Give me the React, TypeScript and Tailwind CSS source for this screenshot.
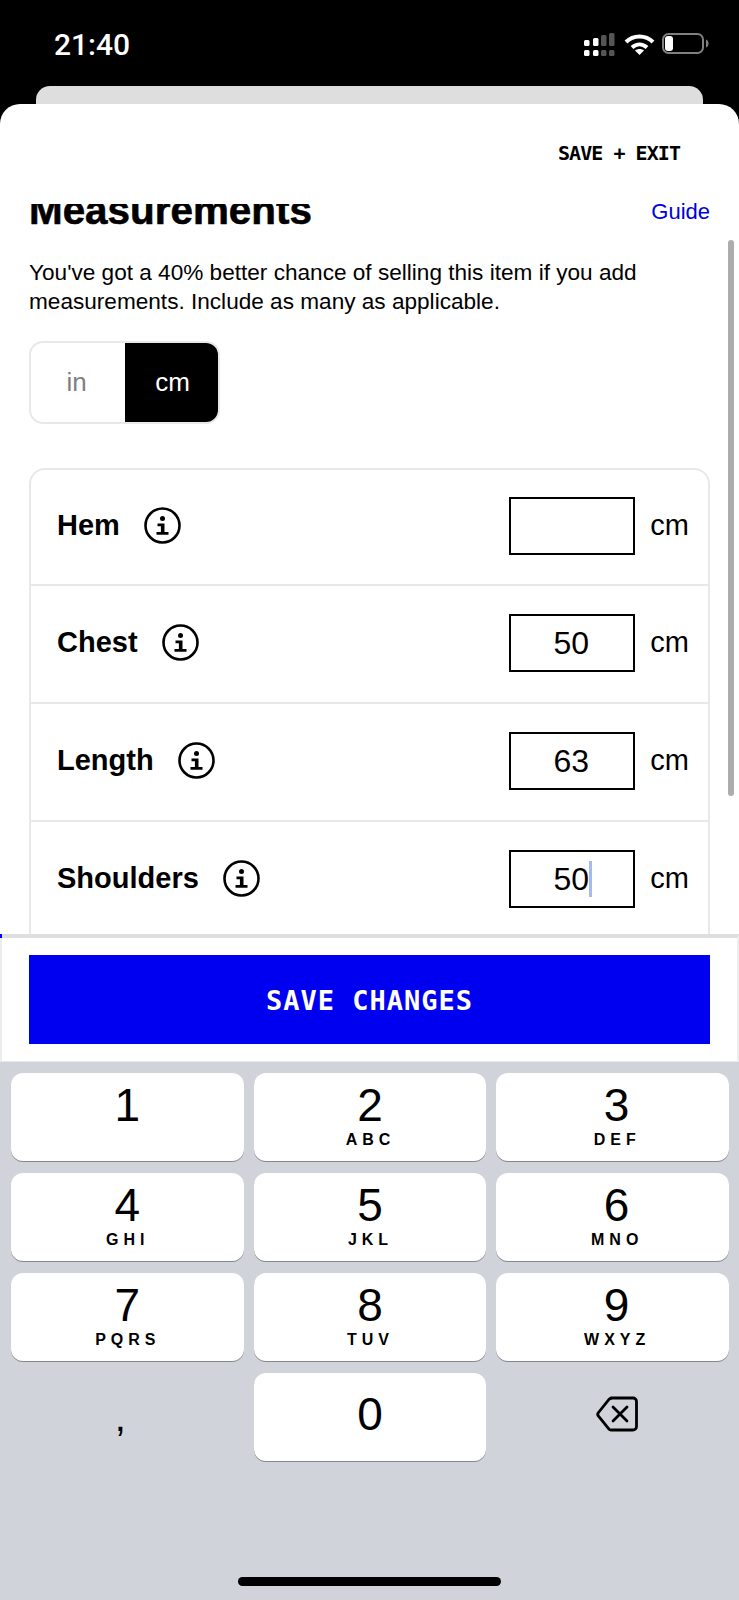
const sans = "font-['Liberation_Sans',Arial,sans-serif]";
const mono = "font-['DejaVu_Sans_Mono',monospace]";

const rows = [
  { label: "Hem", value: "" },
  { label: "Chest", value: "50" },
  { label: "Length", value: "63" },
  { label: "Shoulders", value: "50", caret: true },
];

const keys = [
  { n: "1", l: "", c: "" },
  { n: "2", l: "ABC", c: "" },
  { n: "3", l: "DEF", c: "pl-[8px]" },
  { n: "4", l: "GHI", c: "" },
  { n: "5", l: "JKL", c: "" },
  { n: "6", l: "MNO", c: "pl-[8px]" },
  { n: "7", l: "PQRS", c: "" },
  { n: "8", l: "TUV", c: "" },
  { n: "9", l: "WXYZ", c: "pl-[8px]" },
];

export default function App() {
  return (
    <div className={`flex h-[1600px] w-[739px] flex-col overflow-hidden bg-black ${sans}`}>
      <StatusBar />
      <div className="mx-[36px] h-[18px] shrink-0 rounded-t-[14px] bg-[#dedede]" />

      <div className="relative flex h-[830px] shrink-0 flex-col overflow-hidden rounded-t-[20px] bg-white">
        <div className="flex h-[93px] shrink-0 items-start justify-end pr-[59px] pt-[37px]">
          <span className={`${mono} text-[20px] leading-[24px] font-bold tracking-[-0.95px] text-black`}>
            SAVE + EXIT
          </span>
        </div>

        <div className="min-h-0 flex-1 overflow-hidden px-[29px]">
          <div className="flex h-[28px] items-end justify-between">
            <div className="flex h-[21px] items-end overflow-hidden">
              <h1 className="text-[40.4px] leading-[30px] font-bold text-black [-webkit-text-stroke:0.6px_#000]">
                Measurements
              </h1>
            </div>
            <span className="text-[22px] leading-[26px] text-[#0000e0]">Guide</span>
          </div>

          <p className="mt-[33px] text-[22.6px] leading-[29px] text-black">
            You&apos;ve got a 40% better chance of selling this item if you add
            <br />
            measurements. Include as many as applicable.
          </p>

          <div className="mt-[25px] flex h-[83px] w-[191px] overflow-hidden rounded-[14px] border-2 border-[#e8e8e8] text-[26px]">
            <div className="flex flex-1 items-center justify-center pr-[3px] text-[#808080]">in</div>
            <div className="flex flex-1 items-center justify-center bg-black pl-[2px] text-white">cm</div>
          </div>

          <div className="mt-[44px] w-[681px] rounded-t-[16px] border-2 border-b-0 border-[#e8e8e8]">
            {rows.map((row, i) => (
              <MeasureRow key={row.label} {...row} first={i === 0} />
            ))}
            <div className="h-[40px]" />
          </div>
        </div>

        <div className="absolute top-[136px] right-[5px] h-[556px] w-[6px] rounded-full bg-[#adadad]" />
      </div>

      <div className="relative shrink-0 border-x-2 border-t-4 border-b border-x-[#ececec] border-t-[#dedfe1] border-b-[#e8e8e8] bg-white px-[27px] py-[17px]">
        <div className="absolute -top-[4px] -left-[2px] h-[4px] w-[2px] bg-[#0000f0]" />
        <div className="flex h-[89px] items-center justify-center bg-[#0000f0]">
          <span className={`${mono} pt-[3px] text-[27px] font-bold tracking-[1px] text-white`}>SAVE CHANGES</span>
        </div>
      </div>

      <Keyboard />
    </div>
  );
}

function StatusBar() {
  return (
    <div className="flex h-[86px] shrink-0 items-start justify-between pl-[54px] pr-[30px] pt-[27px] text-white">
      <span className="font-['Roboto',sans-serif] text-[30px] leading-[36px] font-medium">21:40</span>
      <svg width="126" height="26" viewBox="0 0 126 26" className="mt-[4px]">
        <g fill="#fff">
          <rect x="1" y="9" width="5.500" height="6" rx="1.500" />
          <rect x="10" y="7" width="5.500" height="8" rx="1.500" />
          <rect x="1" y="19" width="5.500" height="6" rx="1.500" />
          <rect x="10" y="19" width="5.500" height="6" rx="1.500" />
        </g>
        <g fill="#555">
          <rect x="18" y="4" width="5.500" height="11" rx="1.500" />
          <rect x="26" y="2" width="5.500" height="13" rx="1.500" />
          <rect x="18" y="19" width="5.500" height="6" rx="1.500" />
          <rect x="26" y="19" width="5.500" height="6" rx="1.500" />
        </g>
        <g fill="none" stroke="#fff" strokeWidth="4">
          <path d="M43 11c7.500-7.500 19.500-7.500 27 0" />
          <path d="M49 16.500c4.500-4 10.500-4 15 0" />
        </g>
        <path d="M56.500 24l-4.500-4.500c2.600-2 6.400-2 9 0z" fill="#fff" />
        <rect x="80" y="3" width="40" height="19" rx="5.500" fill="none" stroke="#808080" strokeWidth="2" />
        <rect x="82" y="5" width="8" height="15" rx="3" fill="#fff" />
        <path d="M123 8.500c1.600.6 2.500 2 2.500 4s-.9 3.400-2.500 4z" fill="#808080" />
      </svg>
    </div>
  );
}

function InfoIcon() {
  return (
    <svg width="37" height="37" viewBox="0 0 37 37" className="shrink-0">
      <circle cx="18.500" cy="18.500" r="17" fill="none" stroke="#000" strokeWidth="2.600" />
      <circle cx="18.500" cy="11.500" r="2.500" fill="#000" />
      <path d="M13.500 16.500h7v8.500h4v2.800h-12v-2.800h4.400v-5.700h-3.400z" fill="#000" />
    </svg>
  );
}

function MeasureRow({
  label,
  value,
  caret,
  first,
}: {
  label: string;
  value: string;
  caret?: boolean;
  first: boolean;
}) {
  return (
    <div
      className={`flex items-center pb-[3px] pl-[26px] pr-[19px] ${
        first ? "h-[114px]" : "h-[118px] border-t-2 border-[#e8e8e8]"
      }`}
    >
      <span className="text-[29px] font-bold text-black">{label}</span>
      <span className="ml-[24px] -mt-[1px]">
        <InfoIcon />
      </span>
      <div className="ml-auto flex h-[58px] w-[126px] items-center justify-center border-2 border-black pr-[2px] text-[32px] text-black">
        {value}
        {caret && <span className="-mr-[3px] h-[36px] w-[3px] bg-[#a9b9ee]" />}
      </div>
      <span className="ml-[15px] text-[29px] text-black">cm</span>
    </div>
  );
}

function Key({ n, l, c }: { n: string; l: string; c: string }) {
  return (
    <div className={`flex h-[88px] flex-col items-center rounded-[12px] bg-white pt-[10px] text-black shadow-[0_1px_0_#85878b] ${c}`}>
      <span className="text-[46px] leading-[44px]">{n}</span>
      <span className="mt-[3px] pl-[1px] text-[16px] leading-[20px] font-bold tracking-[5px]">{l}</span>
    </div>
  );
}

function Keyboard() {
  return (
    <div className="relative flex-1 bg-[#d0d3da] pl-[11px] pr-[10px] pt-[11px]">
      <div className="grid grid-cols-3 gap-x-[10px] gap-y-[12px]">
        {keys.map((k) => (
          <Key key={k.n} {...k} />
        ))}
        <div className="flex h-[88px] items-center justify-center pr-[14px] text-[40px] leading-none text-black">,</div>
        <div className="flex h-[88px] items-center justify-center rounded-[12px] bg-white pb-[6px] text-[46px] text-black shadow-[0_1px_0_#85878b]">
          0
        </div>
        <div className="flex h-[88px] items-center justify-center pb-[6px] pl-[8px]">
          <svg width="42" height="36" viewBox="0 0 42 36" fill="none" stroke="#000" strokeWidth="2.800" strokeLinejoin="round">
            <path d="M15 2h22a3.500 3.500 0 0 1 3.500 3.500v25a3.500 3.500 0 0 1-3.500 3.500h-22a3 3 0 0 1-2-.8l-10.500-13a2.800 2.800 0 0 1 0-3.700l10.500-13.200a3 3 0 0 1 2-.8z" />
            <path d="M17 11l14 14M31 11l-14 14" strokeLinecap="round" />
          </svg>
        </div>
      </div>
      <div className="absolute bottom-[14px] left-[238px] h-[9px] w-[263px] rounded-full bg-black" />
    </div>
  );
}
